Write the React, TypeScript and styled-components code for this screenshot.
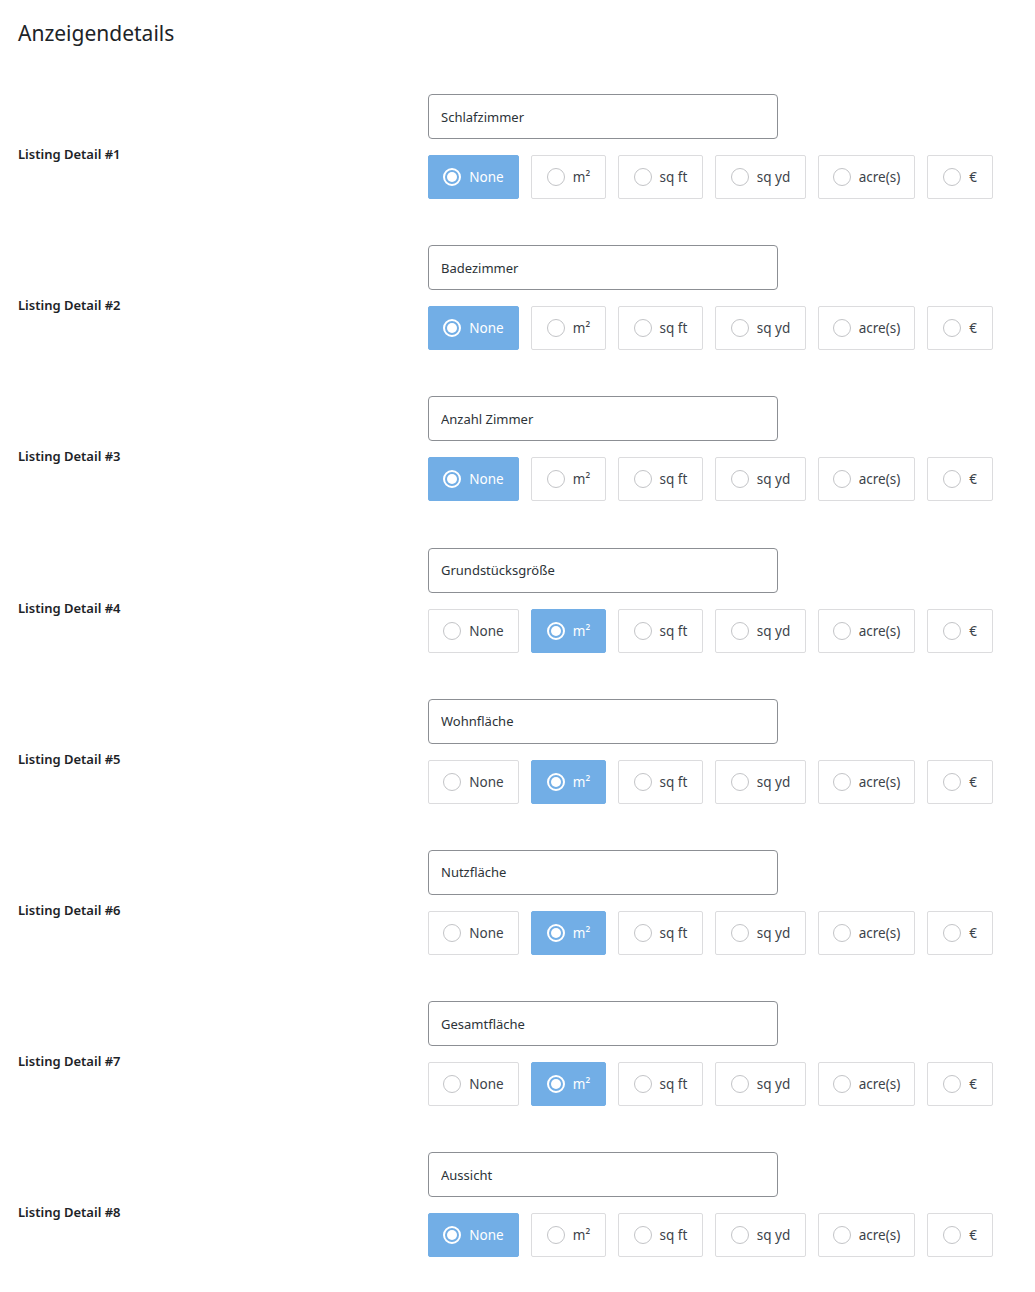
import React from "react";
import styled, { createGlobalStyle } from "styled-components";

const Global = createGlobalStyle`
  html, body { margin: 0; padding: 0; background: #ffffff; }
  body { font-family: "Noto Sans", "Open Sans", sans-serif; color: #1d2327; }
  * { box-sizing: border-box; }
`;

const Page = styled.div`
  padding: 16px 18px 30px 18px;
`;

const Title = styled.h1`
  margin: 0 0 44px 0;
  font-size: 21px;
  font-weight: 400;
  line-height: 34px;
  color: #1d2327;
`;

const List = styled.div`
  display: flex;
  flex-direction: column;
  gap: 46.2px;
`;

const Row = styled.div`
  display: grid;
  grid-template-columns: 410px 1fr;
  align-items: center;
`;

const Label = styled.div`
  font-size: 13px;
  font-weight: 600;
  color: #1d2327;
  padding-top: 15px;
`;

const Fields = styled.div`
  display: flex;
  flex-direction: column;
  gap: 16px;
`;

const TextInput = styled.input`
  width: 350px;
  height: 45px;
  padding: 0 12px;
  border: 1px solid #8c8f94;
  border-radius: 4px;
  font-family: "Noto Sans", "Open Sans", sans-serif;
  font-size: 13px;
  color: #2c3338;
  background: #fff;
  outline: none;
`;

const Options = styled.div`
  display: flex;
  gap: 12px;
`;

const Option = styled.label<{ $active: boolean; $w: number }>`
  display: flex;
  align-items: center;
  justify-content: center;
  gap: 8px;
  width: ${(p) => p.$w}px;
  height: 44px;
  border: 1px solid ${(p) => (p.$active ? "#72aee6" : "#dcdcde")};
  border-radius: 2px;
  background: ${(p) => (p.$active ? "#72aee6" : "#ffffff")};
  color: ${(p) => (p.$active ? "#ffffff" : "#3c434a")};
  font-size: 13.5px;
  cursor: pointer;
`;

const Radio = styled.span<{ $active: boolean }>`
  width: 18px;
  height: 18px;
  border-radius: 50%;
  border: ${(p) => (p.$active ? "2px solid #ffffff" : "1px solid #c3c4c7")};
  display: flex;
  align-items: center;
  justify-content: center;
  flex: none;
  &::after {
    content: "";
    display: ${(p) => (p.$active ? "block" : "none")};
    width: 10px;
    height: 10px;
    border-radius: 50%;
    background: #ffffff;
  }
`;

const units = [
  { label: "None", w: 91 },
  { label: "m²", w: 75 },
  { label: "sq ft", w: 85 },
  { label: "sq yd", w: 91 },
  { label: "acre(s)", w: 97 },
  { label: "€", w: 66 },
];

const details = [
  { name: "Schlafzimmer", sel: 0 },
  { name: "Badezimmer", sel: 0 },
  { name: "Anzahl Zimmer", sel: 0 },
  { name: "Grundstücksgröße", sel: 1 },
  { name: "Wohnfläche", sel: 1 },
  { name: "Nutzfläche", sel: 1 },
  { name: "Gesamtfläche", sel: 1 },
  { name: "Aussicht", sel: 0 },
];

export default function App() {
  return (
    <Page>
      <Global />
      <Title>Anzeigendetails</Title>
      <List>
        {details.map((d, i) => (
          <Row key={i}>
            <Label>Listing Detail #{i + 1}</Label>
            <Fields>
              <TextInput defaultValue={d.name} />
              <Options>
                {units.map((u, j) => (
                  <Option key={j} $active={d.sel === j} $w={u.w}>
                    <Radio $active={d.sel === j} />
                    <span>{u.label}</span>
                  </Option>
                ))}
              </Options>
            </Fields>
          </Row>
        ))}
      </List>
    </Page>
  );
}
